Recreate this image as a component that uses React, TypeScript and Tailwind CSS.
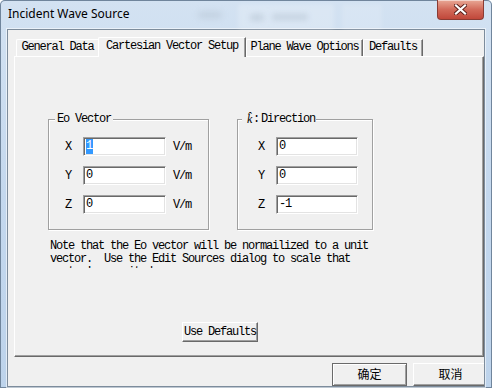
import type { ReactNode } from 'react';

function Field({ value, selected, w }: { value: string; selected?: boolean; w: string }) {
  return (
    <div
      className={`${w} h-[19px] bg-white border border-t-[#a0a0a0] border-l-[#a0a0a0] border-b-white border-r-white shadow-[inset_1px_1px_0_#696969,inset_-1px_-1px_0_#e3e3e3] flex items-center pl-[2px]`}
    >
      {selected ? (
        <span className="bg-[#3399ff] text-white h-[15px] leading-[15px] pr-[1px]">{value}</span>
      ) : (
        <span className="leading-[15px]">{value}</span>
      )}
    </div>
  );
}

function Group({ label, children, className }: { label: ReactNode; children: ReactNode; className: string }) {
  return (
    <div
      className={`relative h-[111px] border border-[#a0a0a0] shadow-[inset_1px_1px_0_#fff,1px_1px_0_#fff] ${className}`}
    >
      {label}
      <div className="flex flex-col gap-[10px]">{children}</div>
    </div>
  );
}

function Tab({ label, w, active, first }: { label: string; w: string; active?: boolean; first?: boolean }) {
  if (active) {
    return (
      <div
        className={`${w} h-[20px] -mb-px relative z-10 bg-[#f0f0f0] border-l border-t border-r border-l-white border-t-white border-r-[#696969] shadow-[inset_-1px_0_0_#a0a0a0] rounded-tl-[2px] text-center pt-[2px] leading-[13px]`}
      >
        {label}
      </div>
    );
  }
  return (
    <div
      className={`${w} h-[17px] bg-[#f0f0f0] border-t border-t-white ${first ? 'border-l border-l-white' : 'border-l border-l-white border-r border-r-[#696969] shadow-[inset_-1px_0_0_#a0a0a0]'} rounded-tl-[2px] text-center pt-[1px] leading-[13px]`}
    >
      {label}
    </div>
  );
}

export default function App() {
  return (
    <div className="w-[492px] h-[388px] overflow-hidden flex flex-col bg-linear-to-b from-[#d3e2f2] via-[#c4d8ee] to-[#bdd3eb] shadow-[inset_0_0_0_1px_#70859c] rounded-t-[5px]">
      {/* title bar */}
      <div className="h-[29px] shrink-0 flex items-start pl-[8px] pr-[8px]">
        <div className="pt-[6px] leading-[16px] text-[12px] text-black font-['Noto_Sans',sans-serif] w-[190px] shrink-0">
          Incident Wave Source
        </div>
        <div className="mt-[12px] w-[24px] h-[6px] bg-[#a9b6c4]/40 blur-[3px] rounded-full" />
        <div className="ml-[16px] mt-[4px] w-[96px] h-[26px] bg-white/20 blur-[2px] rounded-[3px] flex items-center pl-[12px] gap-[8px]">
          <div className="w-[14px] h-[7px] bg-[#a3b1c1]/40 blur-[2px] rounded-full" />
          <div className="w-[36px] h-[6px] bg-[#a3b1c1]/40 blur-[2px] rounded-full" />
        </div>
        <div className="ml-[8px] mt-[4px] w-[40px] h-[26px] bg-white/15 blur-[2px] rounded-[3px]" />
        <div className="grow" />
        <div className="w-[47px] h-[20px] shrink-0 rounded-b-[4px] border border-t-0 border-[#8a3b33] bg-linear-to-b from-[#e8a896] via-[#d26a5a] to-[#c0473a] shadow-[inset_0_1px_0_rgba(255,255,255,0.5)] flex items-center justify-center">
          <svg width="13" height="11" viewBox="0 0 13 11">
            <path d="M2 1.5 L11 9.5 M11 1.5 L2 9.5" stroke="#5a1f1a" strokeWidth="4" strokeLinecap="square" />
            <path d="M2 1.5 L11 9.5 M11 1.5 L2 9.5" stroke="#ffffff" strokeWidth="2.2" strokeLinecap="square" />
          </svg>
        </div>
      </div>

      {/* frame body */}
      <div className="flex-1 px-[7px] pb-[8px] flex flex-col">
        <div className="flex-1 overflow-hidden bg-[#f0f0f0] border border-[#7d8c9c] shadow-[0_0_0_1px_rgba(255,255,255,0.55)] font-['Liberation_Mono',monospace] text-[12px] tracking-[-1.2px] text-black">
          <div className="ml-[6px] mt-[7px] w-[470px]">
            <div className="h-[19px] flex items-end pl-[2px]">
              <Tab label="General Data" w="w-[82px]" first />
              <Tab label="Cartesian Vector Setup" w="w-[148px]" active />
              <Tab label="Plane Wave Options" w="w-[117px]" />
              <Tab label="Defaults" w="w-[60px]" />
            </div>
            <div className="h-[301px] border border-t-white border-l-white border-r-[#696969] border-b-[#696969] shadow-[inset_-1px_-1px_0_#a0a0a0] pl-[33px] pt-[62px]">
              <div className="flex gap-[28px]">
                <Group
                  className="w-[161px] pl-[16px] pt-[17px]"
                  label={
                    <span className="absolute -top-[7px] left-[6px] px-[2px] bg-[#f0f0f0] leading-[13px]">Eo Vector</span>
                  }
                >
                  {[
                    ['X', '1', true],
                    ['Y', '0', false],
                    ['Z', '0', false],
                  ].map(([l, v, s]) => (
                    <div key={l as string} className="flex items-center">
                      <span className="w-[18px]">{l}</span>
                      <Field value={v as string} selected={s as boolean} w="w-[83px]" />
                      <span className="ml-[7px]">V/m</span>
                    </div>
                  ))}
                </Group>
                <Group
                  className="w-[136px] pl-[20px] pt-[17px]"
                  label={
                    <span className="absolute -top-[7px] left-[4px] pl-[5px] pr-[1px] bg-[#f0f0f0] leading-[13px] flex">
                      <span className="italic font-['Liberation_Serif',serif] tracking-normal w-[6px]">k&#770;</span>
                      <span className="w-[8px]">:</span>
                      <span>Direction</span>
                    </span>
                  }
                >
                  {[
                    ['X', '0'],
                    ['Y', '0'],
                    ['Z', '-1'],
                  ].map(([l, v]) => (
                    <div key={l} className="flex items-center">
                      <span className="w-[18px]">{l}</span>
                      <Field value={v} w="w-[82px]" />
                    </div>
                  ))}
                </Group>
              </div>
              <div className="ml-[2px] mt-[10px] w-[340px] h-[28px] overflow-hidden leading-[13px] whitespace-pre">
                {'Note that the Eo vector will be normailized to a unit\nvector.  Use the Edit Sources dialog to scale that\nvector\'s magnitude.'}
              </div>
              <div className="ml-[134px] mt-[54px] w-[76px] h-[20px] border border-t-white border-l-white border-r-[#696969] border-b-[#696969] shadow-[inset_-1px_-1px_0_#a0a0a0] flex items-center justify-center leading-[13px]">
                Use Defaults
              </div>
            </div>
          </div>
          <div className="flex ml-[324px] mt-[6px] gap-[6px] font-['Noto_Sans_CJK_SC',sans-serif] tracking-normal">
            <div className="w-[75px] h-[23px] shrink-0 border border-[#6a6a6a] shadow-[inset_1px_1px_0_#fff,inset_-1px_-1px_0_#a0a0a0] flex justify-center pt-[2px] leading-[15px]">
              确定
            </div>
            <div className="w-[75px] h-[23px] shrink-0 border border-t-white border-l-white border-r-[#696969] border-b-[#696969] shadow-[inset_-1px_-1px_0_#a0a0a0] flex justify-center pt-[2px] leading-[15px]">
              取消
            </div>
          </div>
        </div>
      </div>
    </div>
  );
}
